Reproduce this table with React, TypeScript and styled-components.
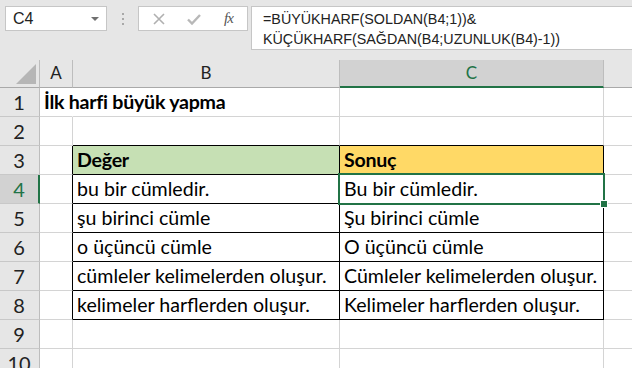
import React from 'react';
import styled, { createGlobalStyle } from 'styled-components';

const Global = createGlobalStyle`
  html, body { margin: 0; padding: 0; background: #fff; overflow: hidden; }
  body { width: 632px; height: 368px; }
`;

const Page = styled.div`
  width: 632px;
  height: 368px;
  overflow: hidden;
  background: #fff;
  display: flex;
  flex-direction: column;
`;

const Toolbar = styled.div`
  height: 60px;
  flex: none;
  box-sizing: border-box;
  background: #e6e6e6;
  display: flex;
  align-items: flex-start;
  padding: 6px 0 0 5px;
`;

const NameBox = styled.div`
  width: 102px;
  height: 25px;
  flex: none;
  box-sizing: border-box;
  background: #fff;
  border: 1px solid #c6c6c6;
  display: flex;
  align-items: center;
  justify-content: space-between;
  padding: 0 7px 0 7px;
  font: 16px "Liberation Sans", Arial, sans-serif;
  color: #222;
`;

const Caret = styled.span`
  width: 0;
  height: 0;
  border-left: 4px solid transparent;
  border-right: 4px solid transparent;
  border-top: 4px solid #707070;
  margin-top: 1px;
`;

const Grip = styled.div`
  flex: none;
  display: flex;
  flex-direction: column;
  gap: 3px;
  margin: 7px 0 0 15px;
`;

const GripDot = styled.span`
  width: 2px;
  height: 2px;
  background: #a8a8a8;
`;

const FnBox = styled.div`
  flex: none;
  width: 110px;
  height: 25px;
  margin-left: 14px;
  box-sizing: border-box;
  background: #fff;
  border: 1px solid #c6c6c6;
  display: flex;
  align-items: center;
  padding-left: 2px;
`;

const IconSlot = styled.span`
  width: 35px;
  height: 23px;
  display: flex;
  align-items: center;
  justify-content: center;
`;

const Fx = styled.span`
  font: italic 15px "Liberation Serif", "Times New Roman", serif;
  color: #555;
  letter-spacing: -1px;
`;

const FormulaBar = styled.div`
  flex: none;
  width: 420px;
  height: 44px;
  margin-left: 3px;
  box-sizing: border-box;
  background: #fff;
  border: 1px solid #c6c6c6;
  padding: 2px 0 0 11px;
  font: 14.3px/20px "Liberation Sans", Arial, sans-serif;
  color: #222;
  white-space: pre;
`;

const Sheet = styled.div`
  display: grid;
  grid-template-columns: 40px 33px 267px 264px 60px;
  grid-template-rows: 28px repeat(10, 29px);
  font-family: Lato, "Open Sans", sans-serif;
`;

const Corner = styled.div`
  box-sizing: border-box;
  background: #e6e6e6;
  border-right: 1px solid #bdbdbd;
  border-bottom: 1px solid #a9a9a9;
  display: flex;
  align-items: flex-end;
  justify-content: flex-end;
  padding: 0 3px 3px 0;
`;

const CornerTriangle = styled.span`
  width: 0;
  height: 0;
  border-left: 20px solid transparent;
  border-bottom: 20px solid #b6b6b6;
`;

const ColHead = styled.div<{ $sel?: boolean }>`
  box-sizing: border-box;
  background: ${p => (p.$sel ? '#d2d2d2' : '#e6e6e6')};
  border-right: 1px solid #bdbdbd;
  border-bottom: ${p => (p.$sel ? '2px solid #217346' : '1px solid #a9a9a9')};
  color: ${p => (p.$sel ? '#217346' : '#222')};
  font-size: 17px;
  line-height: 26px;
  text-align: center;
`;

const RowHead = styled.div<{ $sel?: boolean }>`
  box-sizing: border-box;
  background: ${p => (p.$sel ? '#d2d2d2' : '#e6e6e6')};
  border-right: ${p => (p.$sel ? '2px solid #217346' : '1px solid #bdbdbd')};
  border-bottom: 1px solid #c8c8c8;
  color: ${p => (p.$sel ? '#217346' : '#222')};
  font-size: 20px;
  line-height: 28px;
  text-align: center;
  padding-right: ${p => (p.$sel ? '0' : '1px')};
`;

const Cell = styled.div<{
  $fill?: string;
  $bold?: boolean;
  $r?: 'dark' | 'none';
  $b?: 'dark';
  $sel?: boolean;
}>`
  position: ${p => (p.$sel ? 'relative' : 'static')};
  box-sizing: border-box;
  background: ${p => p.$fill || 'transparent'};
  border-right: 1px solid
    ${p => (p.$r === 'dark' ? '#000' : p.$r === 'none' ? 'transparent' : '#d4d4d4')};
  border-bottom: 1px solid ${p => (p.$b === 'dark' ? '#000' : '#d4d4d4')};
  padding-left: 4px;
  font-size: 19.6px;
  font-weight: ${p => (p.$bold ? 700 : 400)};
  letter-spacing: ${p => (p.$bold ? '-0.25px' : '0')};
  line-height: 28px;
  color: #000;
  white-space: nowrap;
  overflow: visible;
`;

const Selection = styled.div`
  position: absolute;
  left: -2px;
  top: -2px;
  right: -2px;
  bottom: -2px;
  border: 2px solid #217346;
  pointer-events: none;
`;

const FillHandle = styled.span`
  position: absolute;
  right: -5px;
  bottom: -5px;
  width: 6px;
  height: 6px;
  background: #217346;
  border: 1px solid #fff;
`;

type CellDef = {
  text?: string;
  fill?: string;
  bold?: boolean;
  r?: 'dark' | 'none';
  b?: 'dark';
  sel?: boolean;
};

const GREEN = '#c6e0b4';
const YELLOW = '#ffd966';

const rows: CellDef[][] = [
  [{ text: 'İlk harfi büyük yapma', bold: true, r: 'none' }, {}, {}, {}],
  [{}, { b: 'dark' }, { b: 'dark' }, {}],
  [{ r: 'dark' }, { text: 'Değer', bold: true, fill: GREEN, r: 'dark', b: 'dark' }, { text: 'Sonuç', bold: true, fill: YELLOW, r: 'dark', b: 'dark' }, {}],
  [{ r: 'dark' }, { text: 'bu bir cümledir.', r: 'dark', b: 'dark' }, { text: 'Bu bir cümledir.', r: 'dark', b: 'dark', sel: true }, {}],
  [{ r: 'dark' }, { text: 'şu birinci cümle', r: 'dark', b: 'dark' }, { text: 'Şu birinci cümle', r: 'dark', b: 'dark' }, {}],
  [{ r: 'dark' }, { text: 'o üçüncü cümle', r: 'dark', b: 'dark' }, { text: 'O üçüncü cümle', r: 'dark', b: 'dark' }, {}],
  [{ r: 'dark' }, { text: 'cümleler kelimelerden oluşur.', r: 'dark', b: 'dark' }, { text: 'Cümleler kelimelerden oluşur.', r: 'dark', b: 'dark' }, {}],
  [{ r: 'dark' }, { text: 'kelimeler harflerden oluşur.', r: 'dark', b: 'dark' }, { text: 'Kelimeler harflerden oluşur.', r: 'dark', b: 'dark' }, {}],
  [{}, {}, {}, {}],
  [{}, {}, {}, {}],
];

const XIcon = () => (
  <svg width="14" height="14" viewBox="0 0 14 14">
    <path d="M2 2 L12 12 M12 2 L2 12" stroke="#b0b0b0" strokeWidth="1.6" fill="none" />
  </svg>
);

const CheckIcon = () => (
  <svg width="16" height="14" viewBox="0 0 16 14">
    <path d="M2 7.5 L6 11.5 L14 3" stroke="#b8b8b8" strokeWidth="2.4" fill="none" />
  </svg>
);

export default function App() {
  return (
    <Page>
      <Global />
      <Toolbar>
        <NameBox>
          <span>C4</span>
          <Caret />
        </NameBox>
        <Grip>
          <GripDot />
          <GripDot />
          <GripDot />
        </Grip>
        <FnBox>
          <IconSlot>
            <XIcon />
          </IconSlot>
          <IconSlot>
            <CheckIcon />
          </IconSlot>
          <IconSlot>
            <Fx>fx</Fx>
          </IconSlot>
        </FnBox>
        <FormulaBar>{'=BÜYÜKHARF(SOLDAN(B4;1))&\nKÜÇÜKHARF(SAĞDAN(B4;UZUNLUK(B4)-1))'}</FormulaBar>
      </Toolbar>
      <Sheet>
        <Corner>
          <CornerTriangle />
        </Corner>
        <ColHead>A</ColHead>
        <ColHead>B</ColHead>
        <ColHead $sel>C</ColHead>
        <ColHead />
        {rows.map((cells, i) => (
          <React.Fragment key={i}>
            <RowHead $sel={i === 3}>{i + 1}</RowHead>
            {cells.map((c, j) => (
              <Cell key={j} $fill={c.fill} $bold={c.bold} $r={c.r} $b={c.b} $sel={c.sel}>
                {c.text}
                {c.sel && (
                  <Selection>
                    <FillHandle />
                  </Selection>
                )}
              </Cell>
            ))}
          </React.Fragment>
        ))}
      </Sheet>
    </Page>
  );
}
